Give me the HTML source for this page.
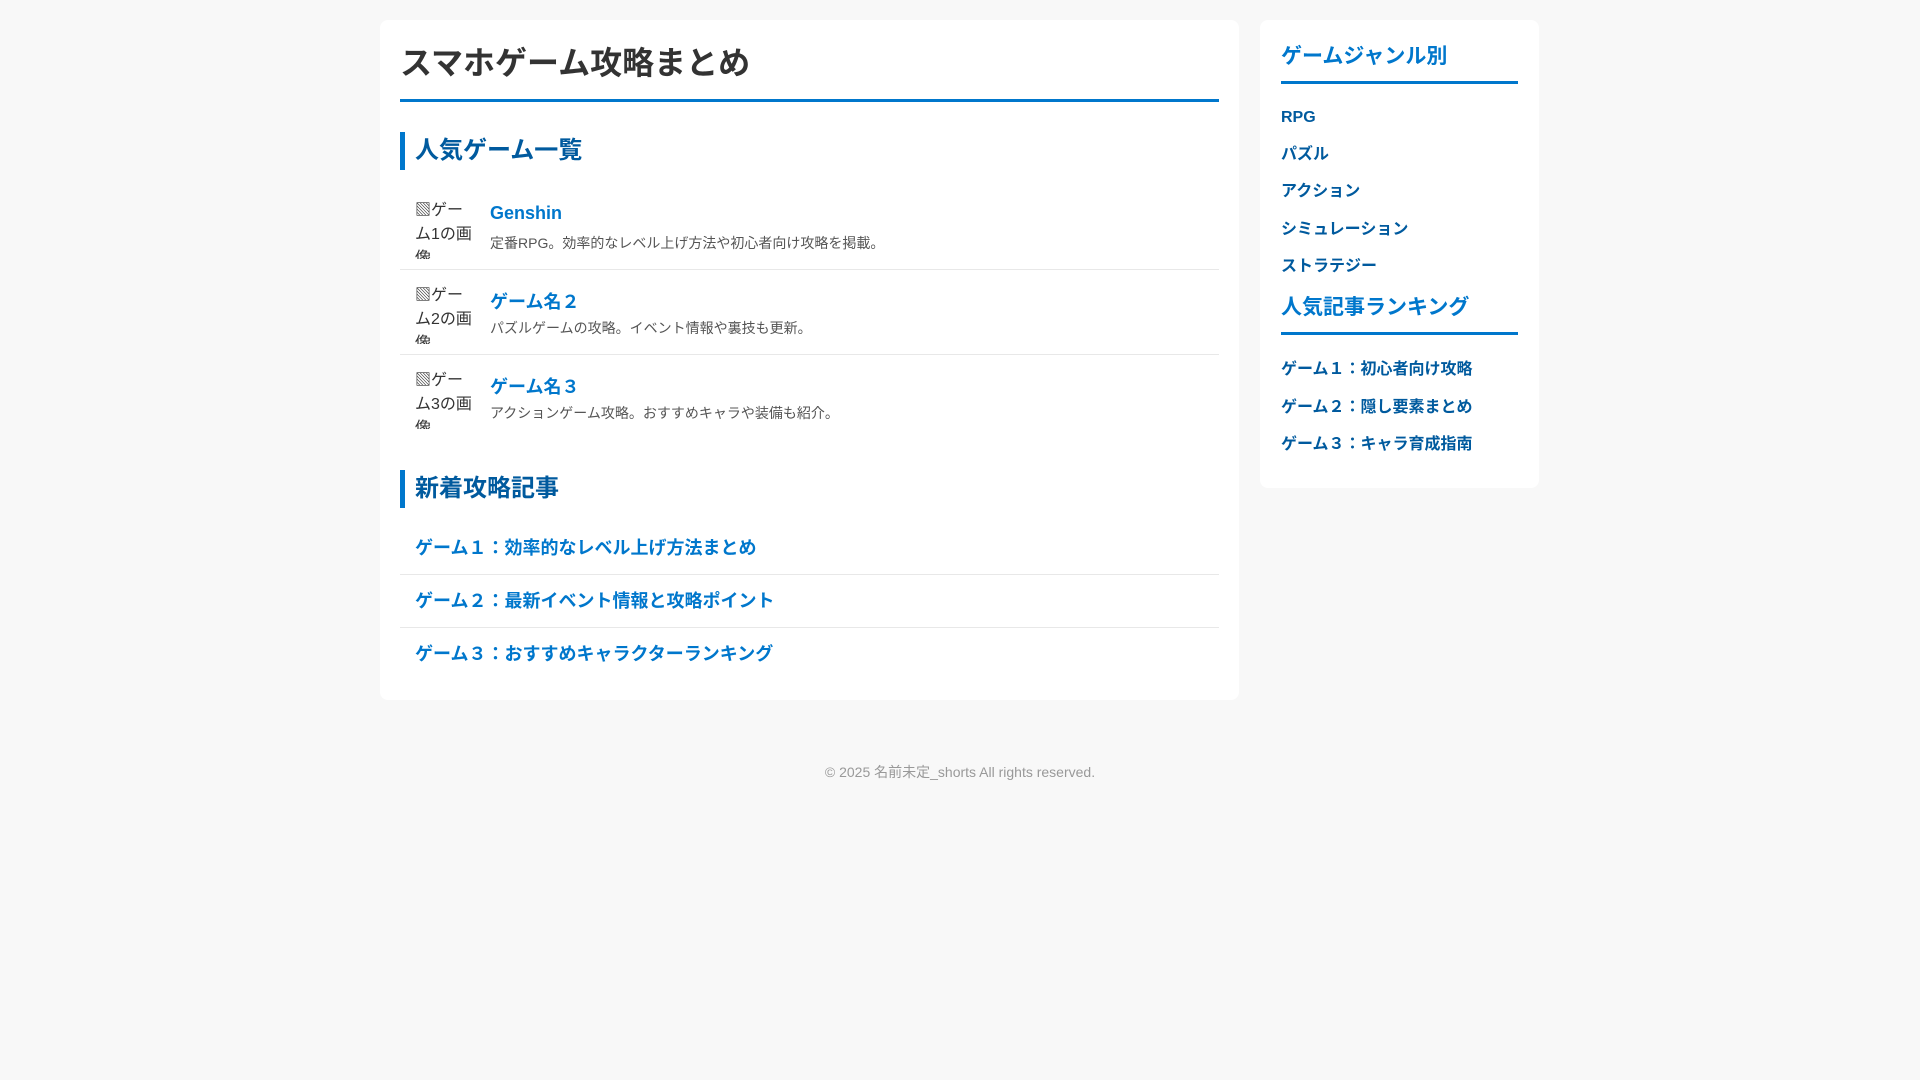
<!DOCTYPE html>
<html><head><meta charset="utf-8"><style>
*{box-sizing:border-box;margin:0;padding:0}
body{width:1920px;height:1080px;background:#f8f8f8;font-family:"Liberation Sans","Noto Sans CJK JP",sans-serif;color:#333;position:relative;overflow:hidden}
.card{position:absolute;background:#fff;border-radius:8px}
#main{left:380px;top:20px;width:859px;height:680px}
#side{left:1260px;top:20px;width:279px;height:468px}
h1{position:absolute;left:20px;top:22px;font-size:32px;font-weight:bold;color:#333;line-height:42px}
.rule{position:absolute;left:20px;right:20px;height:3px;background:#0077cc}
.h2{position:absolute;left:20px;border-left:5px solid #0077cc;padding-left:10px;font-size:24px;font-weight:bold;color:#005a9e;line-height:38px;height:38px}
.item{position:absolute;left:20px;right:20px;height:85px;border-bottom:1px solid #e8e8e8}
.img{position:absolute;left:15px;top:14px;width:60px;height:60px;overflow:hidden;font-size:16px;line-height:24px;color:#333;white-space:normal}
.it{position:absolute;left:90px;top:18px;font-size:18px;font-weight:bold;color:#0077cc}
.id{position:absolute;left:90px;top:48px;font-size:14px;color:#555}
.lnk{position:absolute;left:20px;right:20px;height:53px;border-bottom:1px solid #e8e8e8;font-size:18px;font-weight:bold;color:#0077cc;padding-left:15px;line-height:53px}
.h3{position:absolute;left:21px;font-size:21px;font-weight:bold;color:#0077cc;line-height:30px}
.sl{position:absolute;left:21px;font-size:16px;font-weight:bold;color:#005a9e;line-height:20px}
.srule{position:absolute;left:21px;right:21px;height:3px;background:#0077cc}
#foot{position:absolute;left:0;right:0;top:762px;text-align:center;font-size:14px;color:#999}
</style></head><body>
<div class="card" id="main">
<h1>スマホゲーム攻略まとめ</h1>
<div class="rule" style="top:79px"></div>
<div class="h2" style="top:112px">人気ゲーム一覧</div>
<div class="item" style="top:165px"><div class="img">▧ゲーム1の画像</div><div class="it">Genshin</div><div class="id">定番RPG。効率的なレベル上げ方法や初心者向け攻略を掲載。</div></div>
<div class="item" style="top:250px"><div class="img">▧ゲーム2の画像</div><div class="it">ゲーム名２</div><div class="id">パズルゲームの攻略。イベント情報や裏技も更新。</div></div>
<div class="item" style="top:335px;border-bottom:none"><div class="img">▧ゲーム3の画像</div><div class="it">ゲーム名３</div><div class="id">アクションゲーム攻略。おすすめキャラや装備も紹介。</div></div>
<div class="h2" style="top:450px">新着攻略記事</div>
<div class="lnk" style="top:502px">ゲーム１：効率的なレベル上げ方法まとめ</div>
<div class="lnk" style="top:555px">ゲーム２：最新イベント情報と攻略ポイント</div>
<div class="lnk" style="top:608px;border-bottom:none">ゲーム３：おすすめキャラクターランキング</div>
</div>
<div class="card" id="side">
<div class="h3" style="top:22px">ゲームジャンル別</div>
<div class="srule" style="top:61px"></div>
<div class="sl" style="top:88px">RPG</div>
<div class="sl" style="top:125px">パズル</div>
<div class="sl" style="top:162px">アクション</div>
<div class="sl" style="top:200px">シミュレーション</div>
<div class="sl" style="top:237px">ストラテジー</div>
<div class="h3" style="top:273px">人気記事ランキング</div>
<div class="srule" style="top:312px"></div>
<div class="sl" style="top:340px">ゲーム１：初心者向け攻略</div>
<div class="sl" style="top:378px">ゲーム２：隠し要素まとめ</div>
<div class="sl" style="top:415px">ゲーム３：キャラ育成指南</div>
</div>
<div id="foot">© 2025 名前未定_shorts All rights reserved.</div>
</body></html>
